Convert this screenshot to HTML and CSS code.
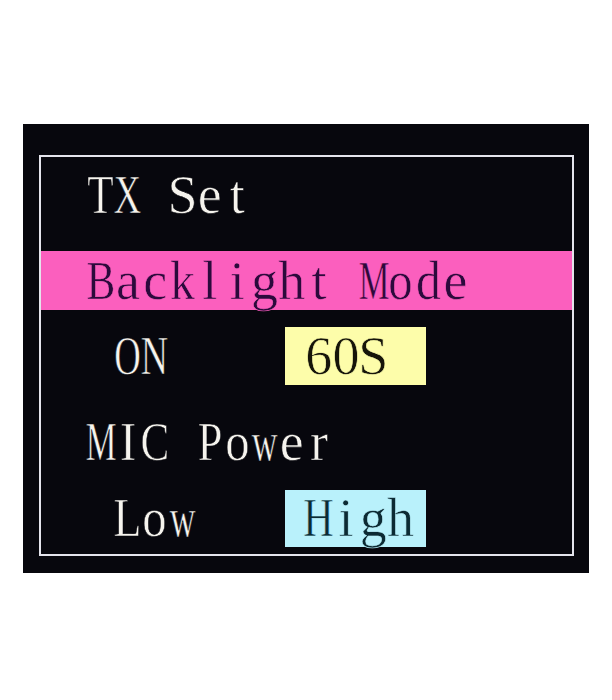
FILE: index.html
```html
<!DOCTYPE html>
<html lang="en">
<head>
  <meta charset="UTF-8">
  <meta name="viewport" content="width=device-width, initial-scale=1">
  <title>TX Set</title>
  <link rel="stylesheet" href="styles.css">
</head>
<body>

  <div class="screen">
    <div class="frame">
      <div class="row title"><span class="mono">TX Set</span></div>

      <div class="row selected"><span class="mono">Backlight Mode</span></div>

      <div class="row option">
        <span class="label"><span class="mono">ON</span></span>
        <span class="choice choice-yellow"><span class="mono">60S</span></span>
      </div>

      <div class="row title power"><span class="mono">MIC Power</span></div>

      <div class="row option">
        <span class="label"><span class="mono">Low</span></span>
        <span class="choice choice-cyan"><span class="mono">High</span></span>
      </div>
    </div>
  </div>

  <script>
    // Put every character in a fixed cell so the serif font lines up like the LCD's monospace grid.
    // Wide letters get squeezed a bit to fit their cell.
    const squeeze = { M: .64, O: .68, N: .7, X: .7, H: .78, W: .66, T: .8, B: .8, C: .8, L: .85, P: .82, I: .9, m: .62, w: .66, o: .9, d: .92, k: .92 };

    document.querySelectorAll('.mono').forEach(el => {
      const text = el.textContent;
      el.textContent = '';
      for (const ch of text) {
        const cell = document.createElement('span');
        cell.className = 'cell';
        const glyph = document.createElement('span');
        glyph.className = 'glyph';
        glyph.textContent = ch;
        if (squeeze[ch]) glyph.style.transform = `scaleX(${squeeze[ch]})`;
        cell.appendChild(glyph);
        el.appendChild(cell);
      }
    });
  </script>

</body>
</html>
```

FILE: styles.css
```css
body {
  margin: 0;
  padding: 124px 0 0;
  background: #fff;
}

.screen {
  width: 566px;
  height: 449px;
  margin: 0 auto;
  background: #07070d;
  padding: 31px 15px 17px 16px;
  box-sizing: border-box;
}

.frame {
  height: 100%;
  border: 2px solid #e4e4ec;
  box-sizing: border-box;
  padding-top: 9px;
  display: flex;
  flex-direction: column;
}

.row {
  display: flex;
  align-items: center;
  height: 58px;
  flex-shrink: 0;
  padding-left: 46px; /* first character column */
  color: #f6f4ee;
  -webkit-text-stroke: 0.6px #07070d; /* thins the strokes like the LCD font */
}

.selected {
  height: 59px;
  margin-top: 27px;
  background: #fb5fbe;
  color: #2c0a3c;
  -webkit-text-stroke-color: #fb5fbe;
}

.option {
  padding-left: 73px; /* one column in */
  margin-top: 17px;
}

.power {
  margin-top: 28px;
}

.power + .option {
  margin-top: 18px;
}

.label {
  width: 171px;
}

.choice {
  display: flex;
  align-items: center;
  width: 141px;
  height: 58px;
  padding-left: 20px;
  box-sizing: border-box;
}

.choice-yellow {
  background: #fdfdaa;
  color: #16150a;
  -webkit-text-stroke-color: #fdfdaa;
}

.choice-cyan {
  height: 57px;
  background: #b9f1fb;
  color: #0c2a33;
  -webkit-text-stroke-color: #b9f1fb;
}

/* monospace text built from serif glyphs */
.mono {
  display: flex;
  font-family: "Liberation Serif", "Times New Roman", serif;
  font-size: 54px;
  line-height: 1;
}

.cell {
  display: flex;
  justify-content: center;
  width: 27.3px;
  flex-shrink: 0;
}

.glyph {
  display: inline-block;
  white-space: pre;
}
```
